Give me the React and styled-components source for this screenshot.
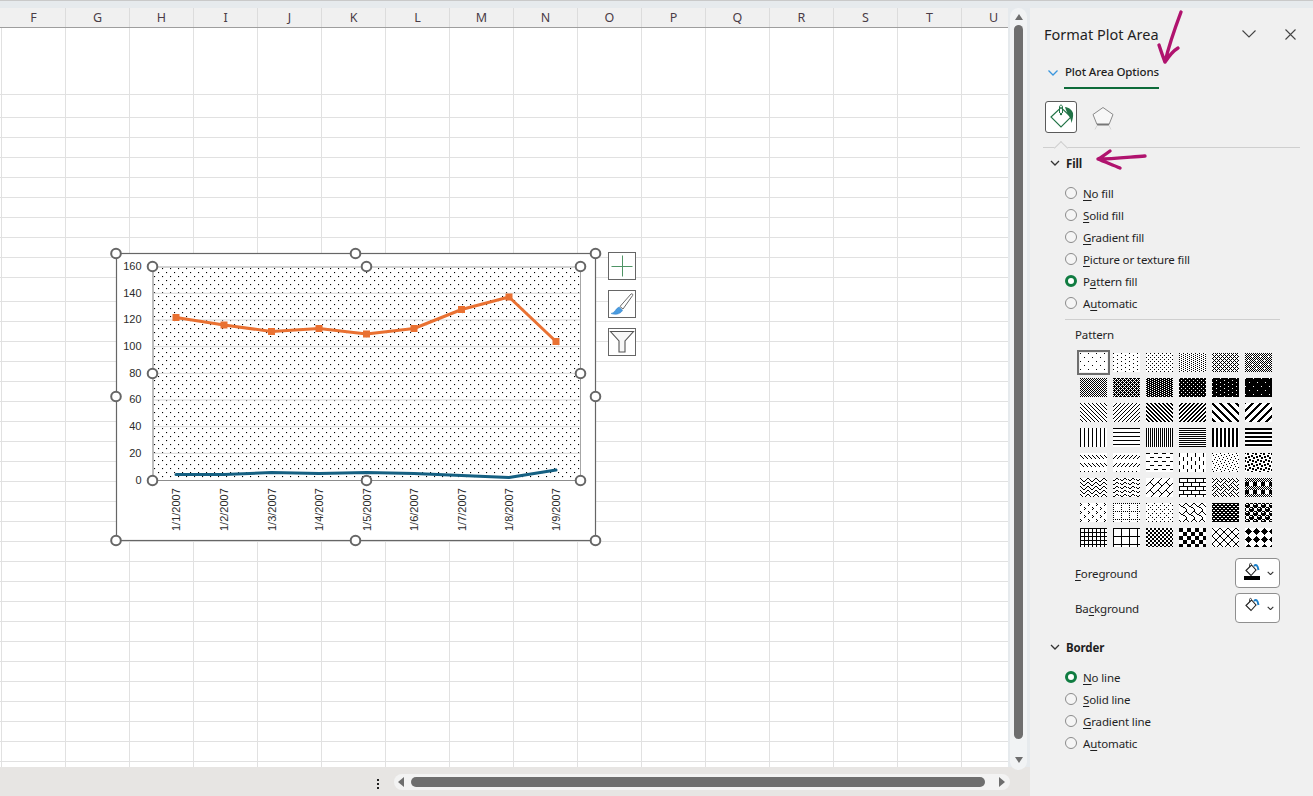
import React from "react";
import styled, { createGlobalStyle } from "styled-components";

const Global = createGlobalStyle`
  html, body { margin: 0; padding: 0; height: 100%; overflow: hidden; background: #f0f0f0; }
  * { box-sizing: border-box; }
`;

const Page = styled.div`
  width: 1313px; height: 796px; display: flex; flex-direction: column; position: relative; overflow: hidden;
  font-family: "Noto Sans", "Open Sans", sans-serif; color: #1f1f1f;
`;
const TopStrip = styled.div`
  height: 8px; flex: none; background: #e6eaed; border-top: 1px solid #c9c9c9;
`;
const Body = styled.div`display: flex; height: 788px;`;
const LeftColumn = styled.div`width: 1030px; flex: none; display: flex; flex-direction: column;`;
const SheetRow = styled.div`display: flex; height: 759px; flex: none;`;
const Sheet = styled.div`width: 1008px; flex: none; display: flex; flex-direction: column; overflow: hidden; background: #fff;`;
const HeaderBar = styled.div`
  height: 20px; flex: none; display: flex; padding-left: 2px; background: #f0f0f0; border-bottom: 1px solid #9e9e9e;
`;
const HeaderCell = styled.div`
  width: 64px; flex: none; display: flex; align-items: center; justify-content: center;
  font-size: 12.5px; color: #4a3c46; border-right: 1px solid #dcdcdc;
`;
const GridArea = styled.div`
  position: relative; flex: 1; overflow: hidden;
`;
const SheetRowLine = styled.div`
  height: ${p => p.$h}px; border-bottom: 1px solid #e1e1e1;
  background-image: repeating-linear-gradient(to right, #e1e1e1 0 1px, transparent 1px 64px);
  background-position: 1px 0;
`;

const ChartLayer = styled.svg`
  position: absolute; left: 100px; top: 212px; width: 540px; height: 310px; display: block;
`;
const TickText = styled.text`font-family: "Liberation Sans", Arial, sans-serif; font-size: 11px; fill: #2b2b2b;`;
const ChartTools = styled.div`
  position: absolute; left: 608px; top: 224px; display: flex; flex-direction: column; gap: 10px;
`;
const ChartTool = styled.div`
  width: 28px; height: 28px; background: #fff; border: 1px solid #666; display: flex; align-items: center; justify-content: center;
`;

const VLane = styled.div`width: 22px; flex: none; background: #e6eaed; padding-left: 2px; position: relative; z-index: 1;`;
const VTrack = styled.div`
  width: 17px; height: 762px; background: #f1f3f4; border-radius: 9px; display: flex; flex-direction: column; align-items: center;
`;
const Tri = styled.div`
  width: 0; height: 0; flex: none;
  border-left: ${p => (p.$dir === "up" || p.$dir === "down") ? "4.5px solid transparent" : "none"};
  border-right: ${p => p.$dir === "up" || p.$dir === "down" ? "4.5px solid transparent" : p.$dir === "left" ? "6px solid #6e6e6e" : "none"};
  border-top: ${p => p.$dir === "down" ? "6px solid #6e6e6e" : p.$dir === "up" ? "none" : "5px solid transparent"};
  border-bottom: ${p => p.$dir === "up" ? "6px solid #6e6e6e" : p.$dir === "down" ? "none" : "5px solid transparent"};
  ${p => p.$dir === "right" ? "border-left: 6px solid #6e6e6e; margin-left: 14px;" : ""}
`;
const VArrowSlot = styled.div`height: 17px; flex: none; display: flex; align-items: center; justify-content: center;`;
const VThumb = styled.div`width: 9px; height: 714px; flex: none; border-radius: 5px; background: #6e6e6e;`;
const VSpacer = styled.div`height: 14px; flex: none; display: flex; align-items: center; justify-content: center; margin-top: 14px;`;

const BottomBar = styled.div`
  height: 29px; flex: none; background: #e7e5e3; display: flex; align-items: flex-start; padding: 7px 0 0 377px;
`;
const MoreDots = styled.div`
  width: 2px; height: 10px; margin-top: 5px; margin-right: 15px;
  background: repeating-linear-gradient(to bottom, #222 0 2px, transparent 2px 4px);
`;
const HTrack = styled.div`
  width: 616px; height: 16px; border-radius: 8px; background: #f3f3f3; display: flex; align-items: center; padding: 0 0 0 4px;
`;
const HThumb = styled.div`width: 574px; height: 10px; border-radius: 5px; background: #6e6e6e; margin-left: 7px; flex: none;`;

const Panel = styled.aside`
  width: 283px; flex: none; height: 788px; background: #f0f0f0; display: flex; flex-direction: column; position: relative; overflow: hidden;
  font-size: 11.5px; letter-spacing: -0.14px;
`;
const TitleRow = styled.div`height: 52px; flex: none; display: flex; align-items: center; padding: 0 17px 0 14px;`;
const Title = styled.h1`font-size: 14.5px; font-weight: 400; margin: 0; flex: 1; color: #1f1f1f; letter-spacing: 0;`;
const TitleIcons = styled.div`display: flex; align-items: center; gap: 29px;`;
const OptionsRow = styled.div`height: 30px; flex: none; display: flex; padding-left: 18px; align-items: flex-start;`;
const OptionsChevron = styled.svg`width: 10px; height: 6px; margin-top: 10px; flex: none;`;
const OptionsLabel = styled.div`
  margin-left: 6px; height: 29px; padding: 2px 1px 0; line-height: 19px; font-weight: 500; border-bottom: 2px solid #0e6b3a;
  width: 95px; white-space: nowrap;
`;
const IconTabs = styled.div`height: 32px; margin-top: 11px; padding-left: 15px; display: flex; align-items: center; flex: none; gap: 10px;`;
const IconTab = styled.div`
  width: 32px; height: 32px; display: flex; align-items: center; justify-content: center; border-radius: 3px;
  background: ${p => p.$active ? "#fff" : "transparent"};
  border: 1px solid ${p => p.$active ? "#5a5a5a" : "transparent"};
`;
const Divider = styled.div`height: 1px; flex: none; margin: 14px 13px 0; background: #cfcfcf; position: relative;
  &::after {
    content: ""; position: absolute; left: 13px; top: -4.5px; width: 9px; height: 9px; background: #f0f0f0;
    border-left: 1px solid #cfcfcf; border-top: 1px solid #cfcfcf; transform: rotate(45deg);
  }
`;
const SectionHead = styled.div`
  height: 30px; flex: none; display: flex; align-items: center; padding-left: 20px; font-weight: 700;
  margin-top: ${p => p.$mt || 0}px; gap: 6px;
`;
const RadioList = styled.div`display: flex; flex-direction: column; padding-left: 35px; margin-top: 5px; flex: none;`;
const RadioRow = styled.label`height: 22px; display: flex; align-items: center; gap: 6px; white-space: nowrap;
  u { text-underline-offset: 2px; text-decoration-thickness: 1px; }
`;
const RadioText = styled.span`margin-top: -1px;`;
const RadioDot = styled.span`
  width: 12px; height: 12px; flex: none; border-radius: 50%; margin-bottom: 2px;
  background: ${p => p.$on ? "#fff" : "#f5f5f5"};
  border: ${p => p.$on ? "3.5px solid #107c41" : "1px solid #8b8b8b"};
`;
const Separator = styled.div`height: 1px; flex: none; margin: 4px 33px 0 35px; background: #cfcfcf;`;
const PatternLabel = styled.div`height: 28px; flex: none; display: flex; align-items: center; padding-left: 45px;`;
const PatternGrid = styled.div`
  margin-top: 5px; padding-left: 50px; display: grid; grid-template-columns: repeat(6, 27px); grid-auto-rows: 19px; column-gap: 6px; row-gap: 6px; flex: none;
`;
const SwatchBox = styled.svg`
  width: 27px; height: 19px; display: block; background: #fff;
  ${p => p.$sel ? "outline: 2px solid #6e6e6e; outline-offset: 1px;" : ""}
`;
const ColorRow = styled.div`
  height: 30px; flex: none; display: flex; align-items: center; justify-content: space-between; padding: 0 33px 0 45px;
  margin-top: ${p => p.$mt}px;
  u { text-underline-offset: 2px; text-decoration-thickness: 1px; }
`;
const ColorButton = styled.div`
  width: 45px; height: 30px; background: #fff; border: 1px solid #8f8f8f; border-radius: 4px; display: flex; align-items: center; padding-left: 7px; gap: 6px;
`;
const Annotations = styled.svg`
  position: absolute; left: 0; top: 0; width: 1313px; height: 796px; pointer-events: none;
`;

const hex = s => s.split(" ").map(h => parseInt(h, 16));
const patterns = [
  "80 00 00 00 08 00 00 00","80 00 08 00 80 00 08 00","88 00 22 00 88 00 22 00","88 22 88 22 88 22 88 22","55 88 55 22 55 88 55 22","aa 55 aa 54 aa 55 aa 45",
  "aa 55 aa 55 aa 55 aa 55","ee 55 bb 55 ee 55 bb 55","77 dd 77 dd 77 dd 77 dd","77 ff dd ff 77 ff dd ff","7f ff f7 ff 7f ff f7 ff","7f ff ff ff f7 ff ff ff",
  "88 44 22 11 88 44 22 11","11 22 44 88 11 22 44 88","cc 66 33 99 cc 66 33 99","33 66 cc 99 33 66 cc 99","c1 e0 70 38 1c 0e 07 83","83 07 0e 1c 38 70 e0 c1",
  "88 88 88 88 88 88 88 88","ff 00 00 00 ff 00 00 00","aa aa aa aa aa aa aa aa","ff 00 ff 00 ff 00 ff 00","cc cc cc cc cc cc cc cc","ff ff 00 00 ff ff 00 00",
  "00 00 88 44 22 11 00 00","00 00 11 22 44 88 00 00","f0 00 00 00 0f 00 00 00","80 80 80 80 08 08 08 08","80 08 40 02 10 01 20 04","b1 30 03 1b d8 c0 0c 8d",
  "81 42 24 18 81 42 24 18","18 25 c0 00 18 25 c0 00","01 02 04 08 18 24 42 81","ff 80 80 80 ff 08 08 08","88 54 22 45 88 14 22 51","aa 55 aa 55 f0 f0 f0 f0",
  "80 40 80 00 08 04 08 00","aa 00 80 00 80 00 80 00","80 00 22 00 08 00 22 00","03 84 48 30 0c 02 01 01","ff 66 ff 99 ff 66 ff 99","77 98 f8 f8 77 89 8f 8f",
  "ff 88 88 88 ff 88 88 88","ff 80 80 80 80 80 80 80","cc cc 33 33 cc cc 33 33","f0 f0 f0 f0 0f 0f 0f 0f","81 42 24 18 18 24 42 81","10 38 7c fe 7c 38 10 00",
];

function Swatch({ bits, sel }) {
  const rows = hex(bits);
  let d = "";
  for (let y = 0; y < 19; y++) {
    for (let x = 0; x < 27; x++) {
      if (rows[y % 8] & (0x80 >> (x % 8))) d += `M${x} ${y}h1v1h-1z`;
    }
  }
  return (
    <SwatchBox $sel={sel} viewBox="0 0 27 19" shapeRendering="crispEdges">
      <path d={d} fill="#000" />
    </SwatchBox>
  );
}

const Chev = ({ w = 10, h = 6, color = "#333", sw = 1.3 }) => (
  <svg width={w} height={h} viewBox="0 0 10 6" style={{ flex: "none" }}>
    <path d="M1 1l4 4 4-4" fill="none" stroke={color} strokeWidth={sw} />
  </svg>
);

const Bucket = ({ bar }) => (
  <svg width="18" height="24" viewBox="0 0 18 24" style={{ flex: "none" }}>
    <path d="M3 9.500L8.500 4 13 9l-5 5.500z" fill="#fff" stroke="#222" strokeWidth="1.100" />
    <path d="M6.500 6V3.500c0-1.500 2-1.500 2 0" fill="none" stroke="#222" strokeWidth=".8" />
    <path d="M11 5c2-2 3.500-1.500 4.500 4" fill="none" stroke="#1a7fc9" strokeWidth="2" />
    {bar && <rect x="1" y="15" width="16" height="4" fill="#000" />}
  </svg>
);

const letters = "FGHIJKLMNOPQRSTU".split("");
const rowHeights = [67, 23, ...Array(8).fill(20), 24, ...Array(23).fill(20), 6];

const xs = [176, 224, 271.5, 319, 366.5, 414, 461.5, 509, 556];
const orange = [317.5, 325, 331.5, 328.5, 334, 328.5, 309.5, 297, 341.5];
const blue = [474.5, 474.5, 472.5, 473.5, 472.5, 473.5, 475.5, 477.5, 470];
const ticks = [160, 140, 120, 100, 80, 60, 40, 20, 0];
const tickY = v => 480 - (v / 160) * 213.4;
const frameHandles = [[116, 253.5], [355.5, 253.5], [595.5, 253.5], [116, 396.5], [595.5, 396.5], [116, 540.5], [355.5, 540.5], [595.5, 540.5]];
const plotHandles = [[152.5, 266.5], [366.5, 266.5], [580.5, 266.5], [152.5, 373.5], [580.5, 373.5], [152.5, 480.5], [366.5, 480.5], [580.5, 480.5]];
const pts = (ys) => xs.map((x, i) => `${x},${ys[i]}`).join(" ");

function Chart() {
  return (
    <ChartLayer viewBox="100 240 540 310">
      <defs>
        <pattern id="dots" x="153" y="268" width="8" height="8" patternUnits="userSpaceOnUse">
          <rect x="1" y="0" width="1.100" height="1.100" fill="#000" />
          <rect x="5" y="4" width="1.100" height="1.100" fill="#000" />
        </pattern>
      </defs>
      <rect x="116.5" y="253.5" width="479" height="287" fill="#fff" stroke="#666" strokeWidth="1.2" />
      <rect x="153" y="267" width="427" height="213" fill="url(#dots)" />
      {ticks.slice(1, 8).map(t => (
        <line key={t} x1="153" x2="580" y1={tickY(t)} y2={tickY(t)} stroke="#d9d9d9" strokeWidth="1" />
      ))}
      <path d="M153 480V267H580.5V480" fill="none" stroke="#a6a6a6" strokeWidth="1" />
      <line x1="153" y1="267" x2="153" y2="480" stroke="#bdbdbd" strokeWidth="2" />
      <line x1="153" y1="480.5" x2="580" y2="480.5" stroke="#8c8c8c" strokeWidth="1" />
      {ticks.map(t => (
        <TickText key={t} x="141.500" y={tickY(t) + 3.5} textAnchor="end">{t}</TickText>
      ))}
      {xs.map((x, i) => (
        <TickText key={x} transform={`translate(${Math.round(x) + 3.5},531) rotate(-90)`}>{`1/${i + 1}/2007`}</TickText>
      ))}
      <polyline points={pts(blue)} fill="none" stroke="#156082" strokeWidth="3" strokeLinejoin="round" strokeLinecap="round" />
      <polyline points={pts(orange)} fill="none" stroke="#e97132" strokeWidth="3" strokeLinejoin="round" />
      {xs.map((x, i) => (
        <rect key={x} x={x - 3.5} y={orange[i] - 3.5} width="7" height="7" fill="#e97132" />
      ))}
      {[...frameHandles, ...plotHandles].map(([x, y], i) => (
        <circle key={i} cx={x} cy={y} r="4.800" fill="#fff" stroke="#666" strokeWidth="2" />
      ))}
    </ChartLayer>
  );
}

const Options = ({ items }) => (
  <RadioList>
    {items.map(([pre, u, post, on]) => (
      <RadioRow key={pre + u + post}>
        <RadioDot $on={on} />
        <RadioText>{pre}<u>{u}</u>{post}</RadioText>
      </RadioRow>
    ))}
  </RadioList>
);

export default function App() {
  return (
    <Page>
      <Global />
      <TopStrip />
      <Body>
        <LeftColumn>
          <SheetRow>
            <Sheet>
              <HeaderBar>
                {letters.map(l => <HeaderCell key={l}>{l}</HeaderCell>)}
              </HeaderBar>
              <GridArea>
                {rowHeights.map((h, i) => <SheetRowLine key={i} $h={h} />)}
                <Chart />
                <ChartTools>
                  <ChartTool>
                    <svg width="26" height="26" viewBox="0 0 26 26"><path d="M13.500 2.500v21M2.500 13.500h21" stroke="#4f9465" strokeWidth="1" fill="none" /></svg>
                  </ChartTool>
                  <ChartTool>
                    <svg width="26" height="26" viewBox="0 0 26 26">
                      <path d="M22 3c1.500-.8 2 .4 1.600 1.500L14 18l-3-2.500z" fill="#fff" stroke="#6a6a6a" strokeWidth="1" />
                      <path d="M2 22.500c4-.5 4.500-5 8-6.500l3.500 3c-1 3.500-6.500 5.500-11.500 3.500z" fill="#4a9be0" stroke="#2f7fc4" strokeWidth=".5" />
                    </svg>
                  </ChartTool>
                  <ChartTool>
                    <svg width="26" height="26" viewBox="0 0 26 26">
                      <path d="M1.500 2.500h23L16 12v11h-6V12z" fill="#f7f7f7" stroke="#555" strokeWidth="1.100" />
                    </svg>
                  </ChartTool>
                </ChartTools>
              </GridArea>
            </Sheet>
            <VLane>
              <VTrack>
                <VArrowSlot><Tri $dir="up" /></VArrowSlot>
                <VThumb />
                <VSpacer><Tri $dir="down" /></VSpacer>
              </VTrack>
            </VLane>
          </SheetRow>
          <BottomBar>
            <MoreDots />
            <HTrack>
              <Tri $dir="left" />
              <HThumb />
              <Tri $dir="right" />
            </HTrack>
          </BottomBar>
        </LeftColumn>
        <Panel>
          <TitleRow>
            <Title>Format Plot Area</Title>
            <TitleIcons>
              <svg width="14" height="8" viewBox="0 0 14 8"><path d="M.5.5L7 7 13.500.5" fill="none" stroke="#444" strokeWidth="1.100" /></svg>
              <svg width="11" height="11" viewBox="0 0 11 11"><path d="M.5.500l10 10M10.500.500l-10 10" fill="none" stroke="#444" strokeWidth="1.100" /></svg>
            </TitleIcons>
          </TitleRow>
          <OptionsRow>
            <OptionsChevron viewBox="0 0 10 6"><path d="M.5.5L5 5 9.500.5" fill="none" stroke="#3a96dd" strokeWidth="1.300" /></OptionsChevron>
            <OptionsLabel>Plot Area Options</OptionsLabel>
          </OptionsRow>
          <IconTabs>
            <IconTab $active>
              <svg width="28" height="28" viewBox="0 0 28 28">
                <path d="M4 14L14 4.500 24 14 14 24z" fill="#fff" stroke="#217346" strokeWidth="1.100" />
                <path d="M12.500 10V4c0-2.500 3-2.500 3 0v6" fill="none" stroke="#217346" strokeWidth="1" />
                <circle cx="14" cy="11" r="1.200" fill="#217346" />
                <path d="M18 4c4 .5 7 3 8 6 .5 3-.5 7-1.500 10-.5-3-1-5-2.500-7-1.500-2-3-5.500-4-9z" fill="#217346" />
              </svg>
            </IconTab>
            <IconTab>
              <svg width="24" height="26" viewBox="0 -1.500 24 26">
                <path d="M12 2l10 7-4 10H6L2 9z" fill="#f7f7f7" stroke="#8a8a8a" strokeWidth="1" />
                <path d="M6 19h12" stroke="#777" strokeWidth="2" />
                <path d="M6 20l-2 4M18 20l2 4" stroke="#d5d5d5" strokeWidth="1" />
              </svg>
            </IconTab>
          </IconTabs>
          <Divider />
          <SectionHead><Chev w={10} h={6} />Fill</SectionHead>
          <Options items={[
            ["", "N", "o fill"], ["", "S", "olid fill"], ["", "G", "radient fill"],
            ["", "P", "icture or texture fill"], ["P", "a", "ttern fill", true], ["A", "u", "tomatic"],
          ]} />
          <Separator />
          <PatternLabel>Pattern</PatternLabel>
          <PatternGrid>
            {patterns.map((p, i) => <Swatch key={i} bits={p} sel={i === 0} />)}
          </PatternGrid>
          <ColorRow $mt={11}>
            <span><u>F</u>oreground</span>
            <ColorButton><Bucket bar /><Chev w={7} h={4.500} sw={1.600} /></ColorButton>
          </ColorRow>
          <ColorRow $mt={5}>
            <span>Ba<u>c</u>kground</span>
            <ColorButton><Bucket /><Chev w={7} h={4.500} sw={1.600} /></ColorButton>
          </ColorRow>
          <SectionHead $mt={9}><Chev w={10} h={6} />Border</SectionHead>
          <Options items={[
            ["", "N", "o line", true], ["", "S", "olid line"], ["", "G", "radient line"], ["A", "u", "tomatic"],
          ]} />
        </Panel>
      </Body>
      <Annotations viewBox="0 0 1313 796">
        <path d="M1181 12C1175 28 1169 45 1165 62M1159 45C1161 51 1163 57 1165 62C1169 56 1173 51 1178 48" fill="none" stroke="#b0136e" strokeWidth="3.400" strokeLinecap="round" strokeLinejoin="round" />
        <path d="M1145 156C1130 157 1113 159 1098 159M1110 151C1106 154 1102 157 1098 159C1105 162 1113 165 1120 168" fill="none" stroke="#b0136e" strokeWidth="3.400" strokeLinecap="round" strokeLinejoin="round" />
      </Annotations>
    </Page>
  );
}
